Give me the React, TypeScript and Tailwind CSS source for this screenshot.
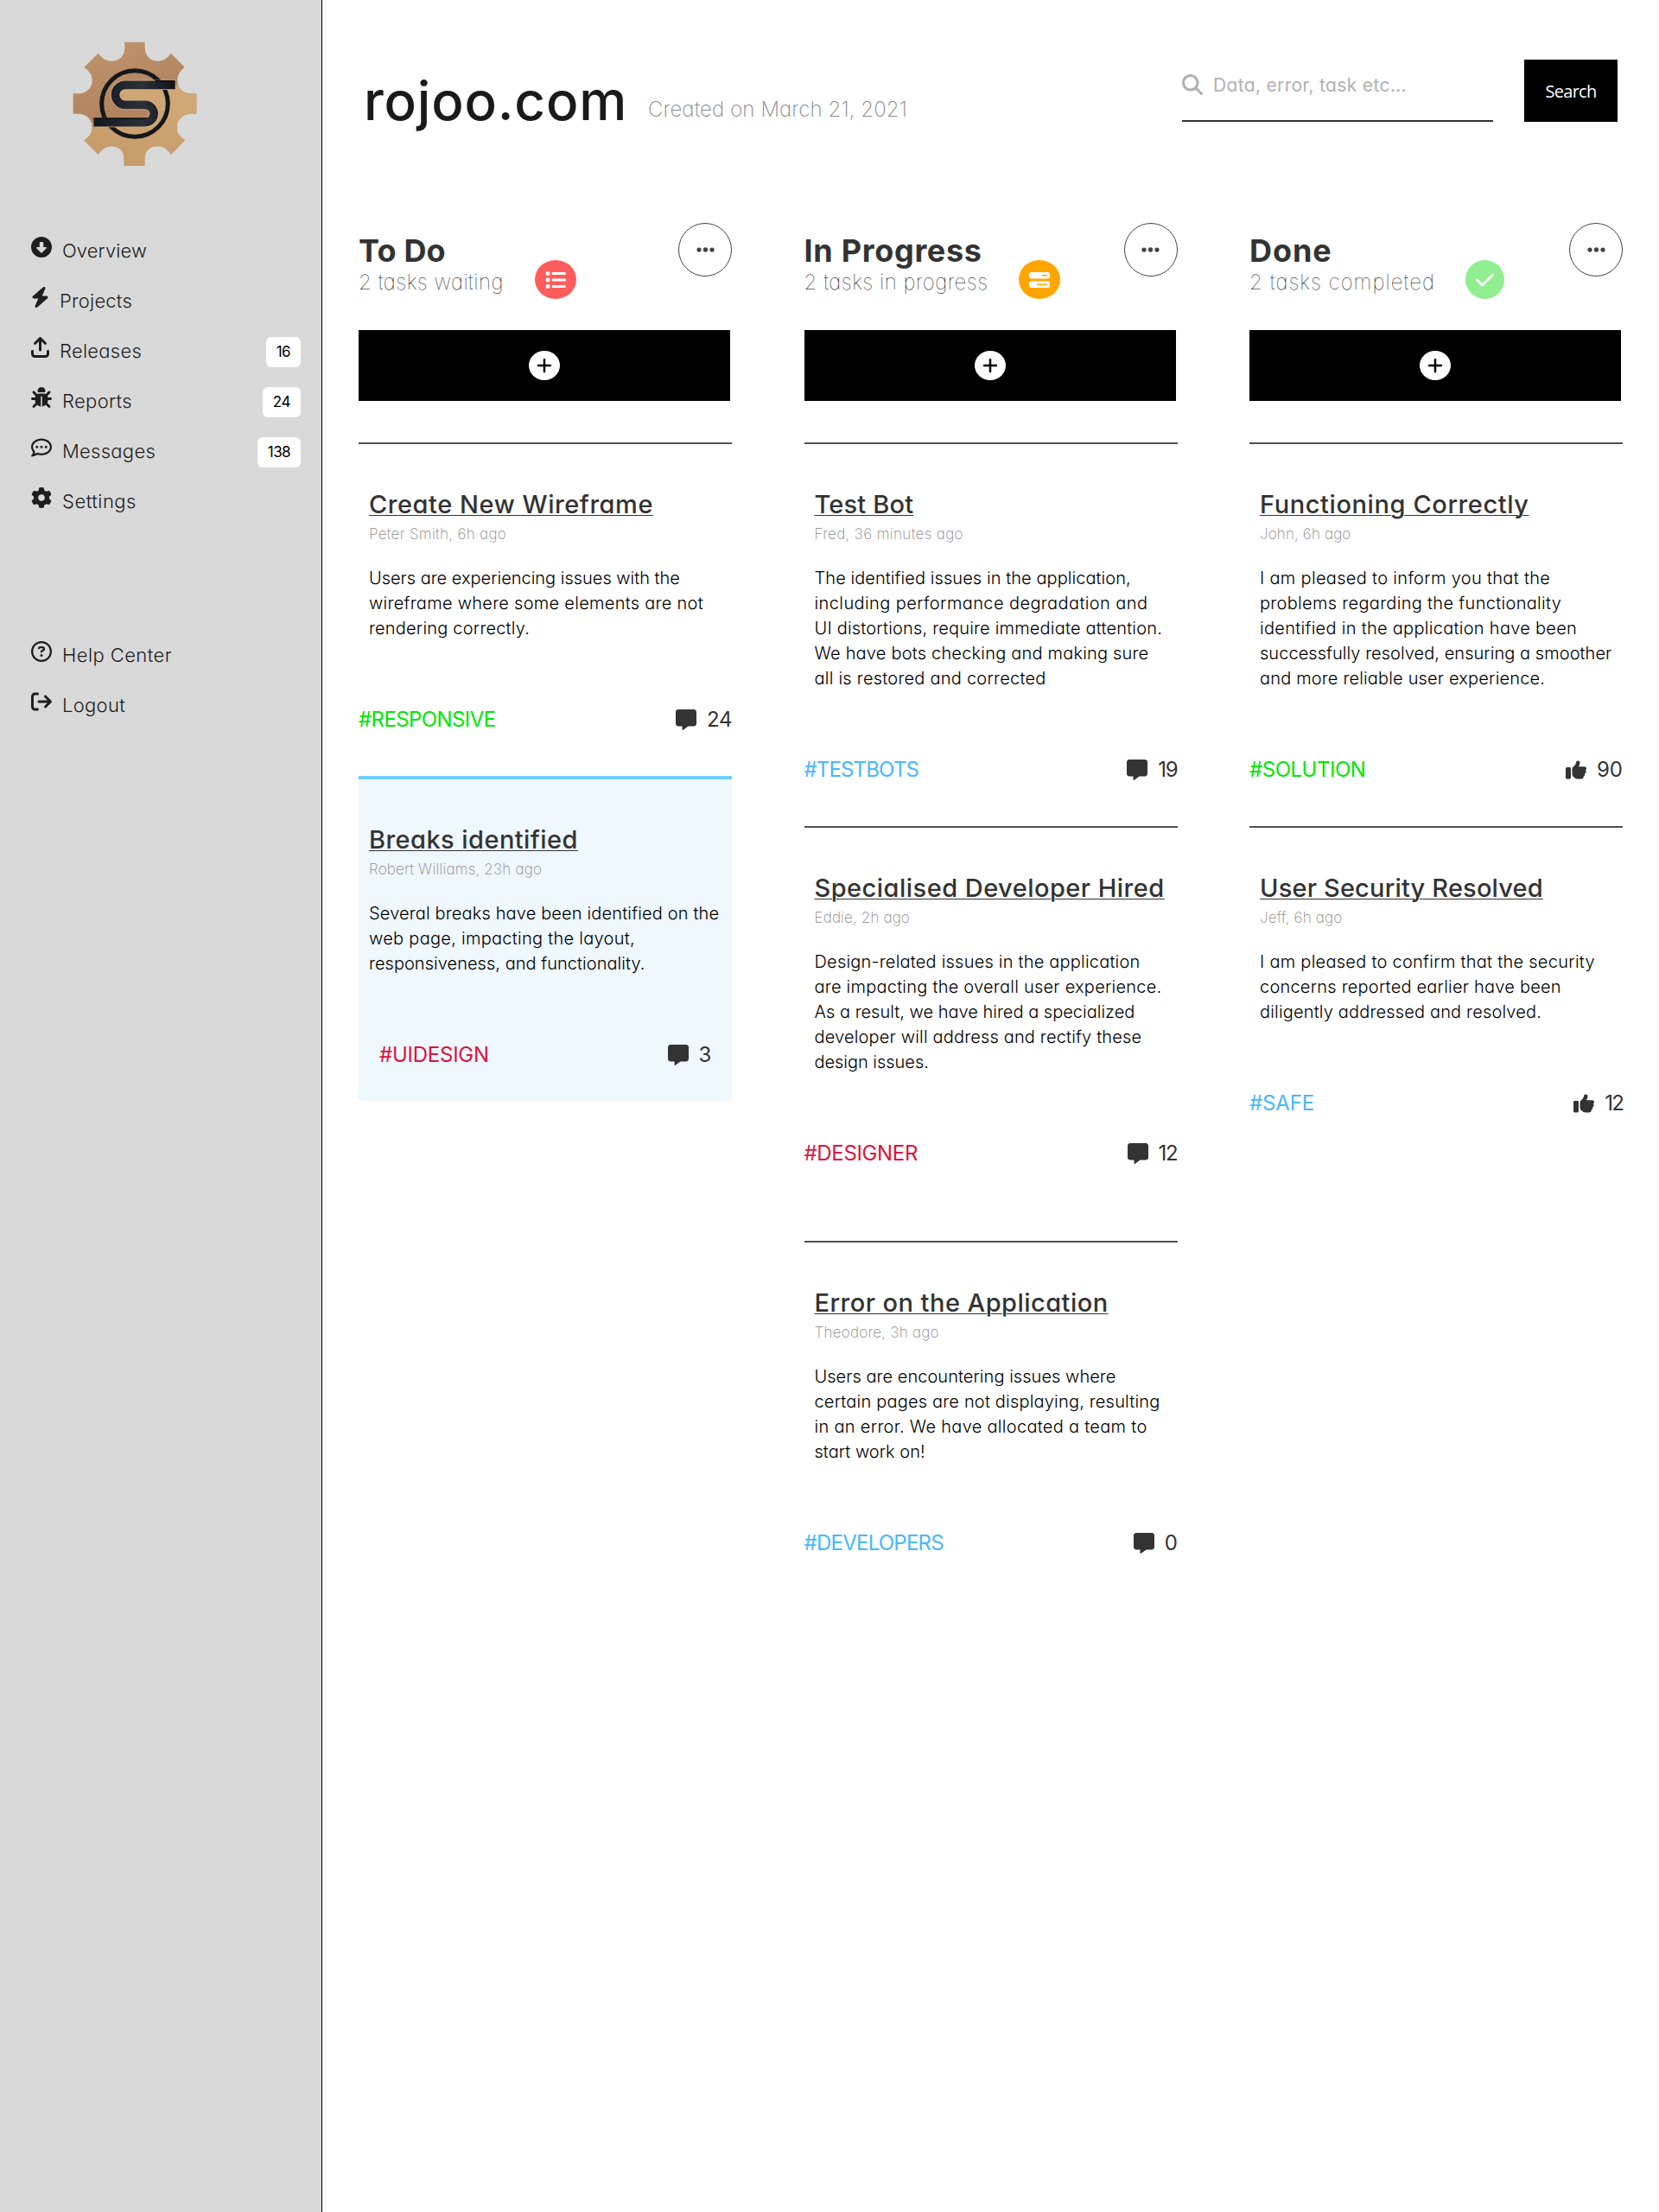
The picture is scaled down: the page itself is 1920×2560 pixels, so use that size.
import type { IconType } from "react-icons";
import {
  FaArrowRightFromBracket,
  FaArrowUpFromBracket,
  FaBarsProgress,
  FaBolt,
  FaBug,
  FaCheck,
  FaCircleDown,
  FaEllipsis,
  FaGear,
  FaList,
  FaMagnifyingGlass,
  FaMessage,
  FaPlus,
  FaRegCircleQuestion,
  FaRegCommentDots,
  FaThumbsUp,
} from "react-icons/fa6";

/* A text with the letter-spacing class it is set in. */
type Text = [text: string, tracking: string];

type NavItem = { label: Text; icon: IconType; narrow?: boolean; badge?: Text };

type Task = {
  title: Text;
  meta: Text;
  lines: Text[];
  tag: Text;
  tagColor: string;
  icon: IconType;
  count: Text;
  active?: boolean;
  spaced?: boolean;
};

type Column = {
  title: Text;
  subtitle: Text;
  subtitleWidth: string;
  badge: string;
  icon: IconType;
  iconSize: string;
  tasks: Task[];
};

const GREEN = "text-[#00e600]";
const BLUE = "text-[#48b6ff]";
const RED = "text-[#dc143c]";

const mainNav: NavItem[] = [
  { label: ["Overview", "tracking-[0.11px]"], icon: FaCircleDown },
  { label: ["Projects", "tracking-[0.21px]"], icon: FaBolt, narrow: true },
  { label: ["Releases", "tracking-[0.25px]"], icon: FaArrowUpFromBracket, narrow: true, badge: ["16", "tracking-[-0.6px]"] },
  { label: ["Reports", "tracking-[0.33px]"], icon: FaBug, badge: ["24", "tracking-[-0.4px]"] },
  { label: ["Messages", "tracking-[0.27px]"], icon: FaRegCommentDots, badge: ["138", "tracking-[-0.6px]"] },
  { label: ["Settings", "tracking-[0.5px]"], icon: FaGear },
];

const footNav: NavItem[] = [
  { label: ["Help Center", "tracking-[0.42px]"], icon: FaRegCircleQuestion },
  { label: ["Logout", "tracking-[0.29px]"], icon: FaArrowRightFromBracket },
];

const columns: Column[] = [
  {
    title: ["To Do", "tracking-[0.2px]"],
    subtitle: ["2 tasks waiting", "tracking-[0.51px]"],
    subtitleWidth: "w-[168px]",
    badge: "w-12 bg-[#ff5c5c]",
    icon: FaList,
    iconSize: "w-6",
    tasks: [
      {
        title: ["Create New Wireframe", "tracking-[0.55px]"],
        meta: ["Peter Smith, 6h ago", "tracking-[0.32px]"],
        lines: [
          ["Users are experiencing issues with the", "tracking-[-0.01px]"],
          ["wireframe where some elements are not", "tracking-[0.28px]"],
          ["rendering correctly.", "tracking-[0.2px]"],
        ],
        tag: ["#RESPONSIVE", "tracking-[-0.6px]"],
        tagColor: GREEN,
        icon: FaMessage,
        count: ["24", "tracking-[-0.4px]"],
      },
      {
        title: ["Breaks identified", "tracking-[0.44px]"],
        meta: ["Robert Williams, 23h ago", "tracking-[0.2px]"],
        lines: [
          ["Several breaks have been identified on the", "tracking-[0.15px]"],
          ["web page, impacting the layout,", "tracking-[0.28px]"],
          ["responsiveness, and functionality.", "tracking-[0.04px]"],
        ],
        tag: ["#UIDESIGN", "tracking-[-0.25px]"],
        tagColor: RED,
        icon: FaMessage,
        count: ["3", "tracking-[-0.4px]"],
        active: true,
      },
    ],
  },
  {
    title: ["In Progress", "tracking-[0.7px]"],
    subtitle: ["2 tasks in progress", "tracking-[0.51px]"],
    subtitleWidth: "w-[212px]",
    badge: "w-12 bg-[#ffa500]",
    icon: FaBarsProgress,
    iconSize: "w-6",
    tasks: [
      {
        title: ["Test Bot", "tracking-[0.18px]"],
        meta: ["Fred, 36 minutes ago", "tracking-[0.36px]"],
        lines: [
          ["The identified issues in the application,", "tracking-[0.07px]"],
          ["including performance degradation and", "tracking-[0.4px]"],
          ["UI distortions, require immediate attention.", "tracking-[0.19px]"],
          ["We have bots checking and making sure", "tracking-[0.2px]"],
          ["all is restored and corrected", "tracking-[0.24px]"],
        ],
        tag: ["#TESTBOTS", "tracking-[-0.85px]"],
        tagColor: BLUE,
        icon: FaMessage,
        count: ["19", "tracking-[-1.2px]"],
      },
      {
        title: ["Specialised Developer Hired", "tracking-[0.47px]"],
        meta: ["Eddie, 2h ago", "tracking-[0.15px]"],
        lines: [
          ["Design-related issues in the application", "tracking-[0.21px]"],
          ["are impacting the overall user experience.", "tracking-[0.24px]"],
          ["As a result, we have hired a specialized", "tracking-[0.01px]"],
          ["developer will address and rectify these", "tracking-[0.17px]"],
          ["design issues.", "tracking-[-0.03px]"],
        ],
        tag: ["#DESIGNER", "tracking-[-0.35px]"],
        tagColor: RED,
        icon: FaMessage,
        count: ["12", "tracking-[-1.2px]"],
      },
      {
        title: ["Error on the Application", "tracking-[0.47px]"],
        meta: ["Theodore, 3h ago", "tracking-[0.26px]"],
        lines: [
          ["Users are encountering issues where", "tracking-[0.04px]"],
          ["certain pages are not displaying, resulting", "tracking-[0.19px]"],
          ["in an error. We have allocated a team to", "tracking-[0.3px]"],
          ["start work on!", "tracking-[0.02px]"],
        ],
        tag: ["#DEVELOPERS", "tracking-[-0.76px]"],
        tagColor: BLUE,
        icon: FaMessage,
        count: ["0", "tracking-[-0.4px]"],
        spaced: true,
      },
    ],
  },
  {
    title: ["Done", "tracking-[0.9px]"],
    subtitle: ["2 tasks completed", "tracking-[1.05px]"],
    subtitleWidth: "w-[214px]",
    badge: "w-[45px] bg-[#90ee90]",
    icon: FaCheck,
    iconSize: "w-[21px]",
    tasks: [
      {
        title: ["Functioning Correctly", "tracking-[0.59px]"],
        meta: ["John, 6h ago", "tracking-[0.15px]"],
        lines: [
          ["I am pleased to inform you that the", "tracking-[0.32px]"],
          ["problems regarding the functionality", "tracking-[0.32px]"],
          ["identified in the application have been", "tracking-[0.29px]"],
          ["successfully resolved, ensuring a smoother", "tracking-[0.05px]"],
          ["and more reliable user experience.", "tracking-[0.17px]"],
        ],
        tag: ["#SOLUTION", "tracking-[-0.48px]"],
        tagColor: GREEN,
        icon: FaThumbsUp,
        count: ["90", "tracking-[0px]"],
      },
      {
        title: ["User Security Resolved", "tracking-[0.18px]"],
        meta: ["Jeff, 6h ago", "tracking-[0.2px]"],
        lines: [
          ["I am pleased to confirm that the security", "tracking-[0.27px]"],
          ["concerns reported earlier have been", "tracking-[0.22px]"],
          ["diligently addressed and resolved.", "tracking-[0.17px]"],
        ],
        tag: ["#SAFE", "tracking-[-0.15px]"],
        tagColor: BLUE,
        icon: FaThumbsUp,
        count: ["12", "tracking-[-1.8px]"],
      },
    ],
  },
];

const GEAR =
  "M253 56H323V77C324 104 344 122 368 122C388 122 399 113 414 95L461 143C441 160 436 172 436 192C437 216 456 235 480 235H502V305H485C455 305 434 325 434 352C434 375 444 384 462 397L414 446C398 425 386 418 365 418C340 418 322 435 322 462V485H251V462C251 435 234 418 209 418C188 418 177 425 161 446L112 397C134 381 140 371 140 350C139 324 120 305 95 305H74V235H95C120 235 140 215 140 190C140 170 133 160 112 143L161 95C177 114 188 122 208 122C233 122 252 104 253 77Z";

function Logo() {
  return (
    <svg viewBox="0 0 600 540" className="h-[180px] w-[200px]" fill="none">
      <defs>
        <linearGradient id="copper" x1="0" y1="0" x2="0.4" y2="1">
          <stop offset="0" stopColor="#c2966f" />
          <stop offset="0.6" stopColor="#b1845f" />
        </linearGradient>
        <linearGradient id="sand" x1="0.3" y1="1" x2="0.7" y2="0">
          <stop offset="0" stopColor="#c69a69" />
          <stop offset="1" stopColor="#d5ae7d" />
        </linearGradient>
        <linearGradient id="ink" x1="145" y1="0" x2="428" y2="0" gradientUnits="userSpaceOnUse">
          <stop offset="0" stopColor="#14171b" />
          <stop offset="0.6" stopColor="#2b3038" />
          <stop offset="1" stopColor="#101215" />
        </linearGradient>
        <clipPath id="lower">
          <path d="M600 205H255A34 34 0 0 0 255 274H324A31 31 0 0 1 324 335H0V540H600Z" />
        </clipPath>
      </defs>
      <path d={GEAR} fill="url(#copper)" />
      <path d={GEAR} fill="url(#sand)" clipPath="url(#lower)" />
      <circle cx="288" cy="270" r="115" stroke="#15181b" strokeWidth="15" />
      <path
        d="M428 205H255A34.500 34.500 0 0 0 255 274H324A30.500 30.500 0 0 1 324 335H145"
        stroke="#d9b48a"
        strokeWidth="34"
      />
      <path
        d="M428 205H255A34.500 34.500 0 0 0 255 274H324A30.500 30.500 0 0 1 324 335H145"
        stroke="url(#ink)"
        strokeWidth="29"
      />
      <path d="M359 191H426M145 321H330" stroke="#0b0c0e" strokeWidth="4" />
    </svg>
  );
}

function NavRow({ item }: { item: NavItem }) {
  const Icon = item.icon;
  return (
    <li className="flex h-[58px] items-start">
      <Icon className={`mt-[13px] h-6 shrink-0 ${item.narrow ? "w-[21px]" : "w-6"}`} />
      <span className={`ml-3 text-[22px] leading-[58px] font-light ${item.label[1]}`}>{item.label[0]}</span>
      {item.badge && (
        <span
          className={`mt-[13px] ml-auto h-[35px] rounded-md bg-white px-3 text-[17px] leading-[35px] text-black ${item.badge[1]}`}
        >
          {item.badge[0]}
        </span>
      )}
    </li>
  );
}

function Sidebar() {
  return (
    <aside className="w-[373px] shrink-0 border-r border-black bg-[#d9d9d9] text-[#1e1e1e]">
      <div className="pt-[30px] pl-[60px]">
        <Logo />
      </div>
      <nav className="mt-[51px] pr-6 pl-9">
        <ul>
          {mainNav.map((item) => (
            <NavRow key={item.label[0]} item={item} />
          ))}
        </ul>
        <ul className="mt-[120px]">
          {footNav.map((item) => (
            <NavRow key={item.label[0]} item={item} />
          ))}
        </ul>
      </nav>
    </aside>
  );
}

function Header() {
  return (
    <header className="flex h-[258px] items-start pr-12 pl-12">
      <h1 className="mt-[77px] w-[329px] text-[62px] leading-[80px] font-medium tracking-[0.8px] text-[#1a1a1a]">
        rojoo.com
      </h1>
      <p className="mt-[109px] text-2xl leading-9 font-extralight tracking-[0.11px] text-[#888]">
        Created on March 21, 2021
      </p>
      <div className="mt-[69px] ml-auto flex h-[72px] w-[360px] items-start border-b-2 border-[#333] text-[#b0b0b0]">
        <FaMagnifyingGlass className="mt-[17px] size-6 shrink-0" />
        <span className="mt-[14px] ml-3 text-[21px] leading-8 tracking-[0.34px]">Data, error, task etc...</span>
      </div>
      <button className="mt-[69px] ml-9 h-[72px] w-[108px] bg-black pt-px font-['Open_Sans',sans-serif] text-xl tracking-[-0.7px] text-white">
        Search
      </button>
    </header>
  );
}

function Card({ task }: { task: Task }) {
  const Icon = task.icon;
  const frame = task.active ? "border-t-4 border-[#70cfff] bg-[#eff7ff] pb-[35px]" : "border-t-2 border-[#505050] pb-[47px]";
  return (
    <article className={`${frame} ${task.spaced ? "mt-9" : ""}`}>
      <div className="pt-12 pl-3 whitespace-nowrap">
        <h3 className="text-[29px] leading-[43px] font-medium text-[#333]">
          <span className={`underline decoration-1 underline-offset-[2px] ${task.title[1]}`}>{task.title[0]}</span>
        </h3>
        <p className={`text-[17px] leading-[26px] font-extralight text-[#888] ${task.meta[1]}`}>{task.meta[0]}</p>
        <p className="mt-6 text-xl leading-[29px] font-light text-black">
          {task.lines.map(([line, tracking]) => (
            <span key={line} className={`block ${tracking}`}>
              {line}
            </span>
          ))}
        </p>
      </div>
      <footer className={`mt-[73px] flex items-start text-2xl leading-9 ${task.active ? "px-6" : ""}`}>
        <span className={`${task.tagColor} ${task.tag[1]}`}>{task.tag[0]}</span>
        <Icon className="mt-[6px] ml-auto size-6 text-[#333]" />
        <span className={`ml-3 text-[#333] ${task.count[1]}`}>{task.count[0]}</span>
      </footer>
    </article>
  );
}

function BoardColumn({ column }: { column: Column }) {
  const Icon = column.icon;
  return (
    <section className="w-[432px]">
      <div className="flex h-[124px] items-start">
        <div className={`pt-[11px] whitespace-nowrap ${column.subtitleWidth}`}>
          <h2 className={`text-4xl leading-[43px] font-bold text-[#333] ${column.title[1]}`}>{column.title[0]}</h2>
          <p className={`text-2xl leading-[30px] font-thin text-black ${column.subtitle[1]}`}>{column.subtitle[0]}</p>
        </div>
        <span
          className={`mt-[43px] ml-9 flex h-[45px] items-center justify-center rounded-[50%] text-white ${column.badge}`}
        >
          <Icon className={`h-6 ${column.iconSize}`} />
        </span>
        <button className="ml-auto flex size-[62px] items-center justify-center rounded-full border border-[#444] text-[#444]">
          <FaEllipsis className="h-6 w-[21px]" />
        </button>
      </div>
      <button className="mb-12 flex h-[82px] w-[430px] items-center justify-center bg-black">
        <span className="flex h-[34px] w-9 items-center justify-center rounded-[50%] bg-white text-black">
          <FaPlus className="h-5 w-[18px]" />
        </span>
      </button>
      {column.tasks.map((task) => (
        <Card key={task.title[0]} task={task} />
      ))}
    </section>
  );
}

export default function App() {
  return (
    <div className="flex min-h-[2560px] bg-white font-['Inter',sans-serif] [font-feature-settings:'cv11']">
      <Sidebar />
      <main className="flex-1">
        <Header />
        <div className="flex justify-between pr-[42px] pl-[42px]">
          {columns.map((column) => (
            <BoardColumn key={column.title[0]} column={column} />
          ))}
        </div>
      </main>
    </div>
  );
}
